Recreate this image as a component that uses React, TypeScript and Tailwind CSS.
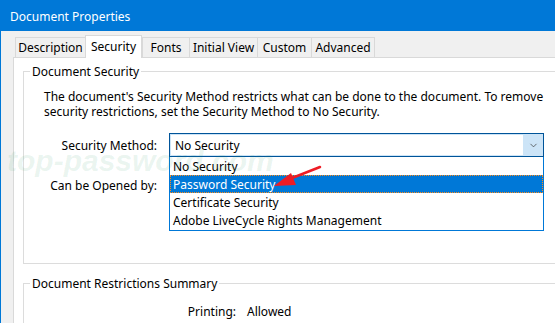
import { ChevronDown } from "lucide-react";

const tabs = [
  { label: "Description", w: "w-[70px]" },
  { label: "Security", w: "w-[57px]", active: true },
  { label: "Fonts", w: "w-[47px]" },
  { label: "Initial View", w: "w-[68px]" },
  { label: "Custom", w: "w-[54px]" },
  { label: "Advanced", w: "w-[64px]", last: true },
];

const methods = ["No Security", "Password Security", "Certificate Security", "Adobe LiveCycle Rights Management"];

export default function App() {
  return (
    <div className="relative w-[555px] h-[323px] overflow-hidden bg-[#f0f0f0] border-l border-[#0078d7] font-['Noto_Sans',sans-serif] text-[12px] leading-[15px] text-black">
      {/* title bar */}
      <div className="h-[31px] bg-[#0078d7] text-white flex items-center pl-[9px] pt-px text-[12px]">Document Properties</div>

      <div className="ml-[12px] mt-[4px]">
        {/* tabs */}
        <div className="flex items-end h-[22px] pl-[2px]">
          {tabs.map((t) =>
            t.active ? (
              <div
                key={t.label}
                className={`${t.w} relative z-10 h-[23px] -mb-px bg-white border border-b-0 border-[#d9d9d9] flex items-center justify-center pb-[2px]`}
              >
                {t.label}
              </div>
            ) : (
              <div
                key={t.label}
                className={`${t.w} h-[20px] bg-[#f0f0f0] border-t border-l ${t.last ? "border-r" : ""} border-[#d9d9d9] flex items-center justify-center`}
              >
                {t.label}
              </div>
            )
          )}
        </div>

        {/* panel */}
        <div className="w-[600px] h-[300px] bg-white border-l border-t border-[#d9d9d9] pl-[9px] pt-[6px]">
          <fieldset className="w-[560px] h-[200px] border border-[#dcdcdc]">
            <legend className="ml-[6px] px-[2px]">Document Security</legend>
            <p className="pl-[20px] pt-[10px] leading-[15px]">
              The document's Security Method restricts what can be done to the document. To remove
              <br />
              security restrictions, set the Security Method to No Security.
            </p>

            <div className="mt-[14px] grid grid-cols-[133px_375px] gap-x-[12px] items-center">
              <div className="text-right">Security Method:</div>
              <div className="relative">
                <div className="h-[24px] border border-[#005499] bg-[#cce4f7] flex">
                  <div className="flex-1 m-px bg-white flex items-center pl-[4px]">No Security</div>
                  <div className="w-[19px] flex items-center justify-center">
                    <ChevronDown className="w-[11px] h-[11px] text-[#333]" strokeWidth={1.5} />
                  </div>
                </div>
                <div className="absolute z-20 left-0 top-full w-full bg-white border border-t-0 border-[#0078d7] pb-px">
                  {methods.map((m, i) => (
                    <div
                      key={m}
                      className={`h-[18px] flex items-center pl-[3px] ${
                        i === 1 ? "bg-[#0078d7] text-white outline-1 outline-dotted outline-[#ff8c1a] -outline-offset-1" : ""
                      }`}
                    >
                      {m}
                    </div>
                  ))}
                </div>
              </div>
              <div className="mt-[16px] h-[24px] flex items-center justify-end">Can be Opened by:</div>
              <div />
            </div>
          </fieldset>

          <fieldset className="mt-[12px] w-[560px] h-[80px] border border-[#dcdcdc]">
            <legend className="ml-[6px] px-[2px]">Document Restrictions Summary</legend>
            <div className="mt-[13px] grid grid-cols-[212px_auto] gap-x-[11px]">
              <div className="text-right">Printing:</div>
              <div>Allowed</div>
            </div>
          </fieldset>
        </div>
      </div>

      {/* watermark */}
      <div className="pointer-events-none absolute z-30 left-[6px] top-[146px] text-[30px] leading-[30px] font-['Liberation_Sans',sans-serif] font-bold italic text-[#2e9e62]/10">
        top-password.com
      </div>

      {/* red arrow */}
      <svg className="pointer-events-none absolute z-40 left-0 top-0" width="555" height="323">
        <line x1="319" y1="167" x2="286" y2="180" stroke="#ee1c25" strokeWidth="2.5" strokeLinecap="round" />
        <polygon points="273,186 290,173 295,185" fill="#ee1c25" />
      </svg>
    </div>
  );
}
